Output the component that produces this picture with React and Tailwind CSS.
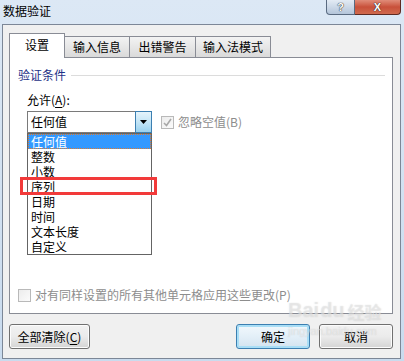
import React from "react";

const font = "font-['Noto_Sans_CJK_SC','Microsoft_YaHei',sans-serif]";

const options = ["任何值", "整数", "小数", "序列", "日期", "时间", "文本长度", "自定义"];

const CheckBox = ({ checked }) => (
  <div className="w-[13px] h-[13px] border border-[#b9b9b9] bg-gradient-to-br from-[#ececec] to-[#fbfbfb] flex items-center justify-center shrink-0">
    {checked && (
      <svg width="9" height="9" viewBox="0 0 9 9">
        <path d="M1 5 L3.5 7.5 L8 1" fill="none" stroke="#a8a8a8" strokeWidth="1.6" />
      </svg>
    )}
  </div>
);

const WinButton = ({ children, primary, className }) => (
  <button
    className={
      "h-[25px] rounded-[3px] border text-[12px] text-black flex items-center justify-center " +
      (primary
        ? "border-[#3c7fb1] bg-gradient-to-b from-[#f2f8fc] via-[#e3eff8] to-[#d3e3ef] shadow-[inset_0_0_0_2px_#a9def6] "
        : "border-[#707070] bg-gradient-to-b from-[#f2f2f2] via-[#ebebeb] to-[#d4d4d4] shadow-[inset_0_0_0_1px_#fcfcfc] ") +
      className
    }
  >
    {children}
  </button>
);

export default function App() {
  return (
    <div className={`w-[404px] h-[361px] bg-gradient-to-b from-[#dce8f5] to-[#c9dbee] flex flex-col overflow-hidden relative ${font}`}>
      {/* title bar */}
      <div className="h-[24px] flex items-start justify-between">
        <div className="pl-[3px] pt-[3px] text-[12px] leading-[16px] text-black">数据验证</div>
        <div className="flex mr-[3px]">
          <div className="w-[29px] h-[15px] border border-t-0 border-[#596a80] rounded-bl-[4px] bg-gradient-to-b from-[#e3ebf4] to-[#b4c5da] flex items-center justify-center text-white font-bold text-[11px] leading-[13px] font-['Liberation_Sans',sans-serif] [text-shadow:0_0_1px_#222,0_0_1px_#222]">
            ?
          </div>
          <div className="w-[46px] h-[15px] border border-t-0 border-l-0 border-[#5e2a22] rounded-br-[4px] bg-gradient-to-b from-[#e08c79] via-[#c8503a] to-[#d06a4e] flex items-center justify-center text-white font-bold text-[11px] leading-[13px] font-['Liberation_Sans',sans-serif] [text-shadow:0_0_1px_#222,0_0_1px_#222]">
            X
          </div>
        </div>
      </div>

      {/* client area */}
      <div className="ml-[2px] w-[399px] h-[335px] border border-[#7c8797] bg-[#f0f0f0] flex flex-col pl-[6px] pt-[8px]">
        {/* tabs */}
        <div className="flex items-end h-[24px] text-[12px] text-black">
          <div className="relative z-10 w-[56px] h-[25px] -mb-px bg-white border border-b-0 border-[#898c95] flex items-center justify-center pb-[2px]">
            设置
          </div>
          <div className="w-[65px] h-[21px] border-t border-r border-[#898c95] bg-gradient-to-b from-[#f3f3f3] to-[#dadada] flex items-center justify-center">
            输入信息
          </div>
          <div className="w-[66px] h-[21px] border-t border-r border-[#898c95] bg-gradient-to-b from-[#f3f3f3] to-[#dadada] flex items-center justify-center">
            出错警告
          </div>
          <div className="w-[75px] h-[21px] border-t border-r border-[#898c95] bg-gradient-to-b from-[#f3f3f3] to-[#dadada] flex items-center justify-center">
            输入法模式
          </div>
        </div>

        {/* panel */}
        <div className="w-[384px] h-[257px] border border-[#898c95] bg-white flex flex-col text-[12px] leading-[16px]">
          <div className="flex items-center pl-[8px] pr-[7px] pt-[9px]">
            <span className="text-[#1e3287]">验证条件</span>
            <div className="flex-1 h-px bg-[#dcdcdc] ml-[5px]" />
          </div>
          <div className="pl-[17px] mt-[9px] text-black">
            允许(<span className="underline underline-offset-2">A</span>):
          </div>
          <div className="flex items-center pl-[17px] mt-[3px]">
            <div className="relative">
              <div className="w-[125px] h-[22px] border border-[#7a7a7a] bg-white flex items-center">
                <span className="flex-1 pl-[3px] text-black">任何值</span>
                <div className="w-[17px] h-[22px] -mr-px border border-[#3c7fb1] bg-gradient-to-b from-[#e5f4fc] via-[#c4e5f6] to-[#98d1ef] flex items-center justify-center">
                  <svg width="7" height="4" viewBox="0 0 7 4">
                    <path d="M0 0 H7 L3.5 4 Z" fill="#000" />
                  </svg>
                </div>
              </div>
              {/* dropdown list */}
              <div className="absolute left-0 top-[22px] w-[125px] border border-[#646464] bg-white z-20">
                {options.map((o, i) => (
                  <div
                    key={o}
                    className={
                      "h-[15px] leading-[15px] pl-[3px] overflow-hidden " +
                      (i === 0 ? "bg-[#3399ff] text-white outline-1 outline-dotted outline-[#e07a2c] -outline-offset-1" : "text-black")
                    }
                  >
                    {o}
                  </div>
                ))}
              </div>
              {/* red highlight */}
              <div className="absolute left-[-7px] top-[66px] w-[137px] h-[18px] border-[3px] border-[#f23a3a] z-30" />
            </div>
            <div className="ml-[9px]">
              <CheckBox checked />
            </div>
            <span className="ml-[4px] text-[#8d8d8d]">忽略空值(B)</span>
          </div>

          <div className="mt-auto mb-[10px] pl-[8px] flex items-center">
            <CheckBox />
            <span className="ml-[4px] text-[#8d8d8d]">对有同样设置的所有其他单元格应用这些更改(P)</span>
          </div>
        </div>

        {/* buttons */}
        <div className="flex mt-[10px] w-[384px]">
          <WinButton className="w-[81px]">
            全部清除(<span className="underline underline-offset-2">C</span>)
          </WinButton>
          <div className="flex-1" />
          <WinButton primary className="w-[74px]">确定</WinButton>
          <WinButton className="w-[74px] ml-[9px]">取消</WinButton>
        </div>
      </div>

      {/* watermark */}
      <div className="absolute left-[288px] top-[300px] pointer-events-none text-white/40 [text-shadow:0_0_1px_rgba(170,170,170,0.5)] leading-none">
        <div className="flex items-end gap-[1px]">
          <span className="text-[20px] font-bold font-['Liberation_Sans',sans-serif]">Bai</span>
          <span className="text-[20px] font-bold font-['Liberation_Sans',sans-serif]">du</span>
          <span className="text-[17px] font-bold ml-[2px]">经验</span>
        </div>
        <div className="text-[11px] mt-[6px] font-['Liberation_Sans',sans-serif]">jingyan.baidu.com</div>
      </div>
    </div>
  );
}
